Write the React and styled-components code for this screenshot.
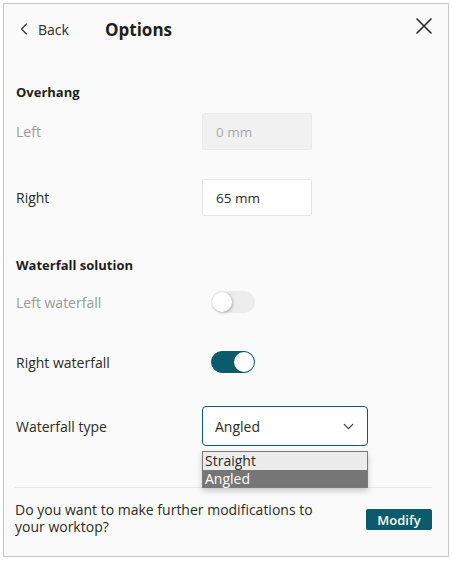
import React from "react";
import styled, { createGlobalStyle } from "styled-components";
import { ChevronLeft, ChevronDown } from "lucide-react";

const Global = createGlobalStyle`
  html, body { margin: 0; padding: 0; background: #ffffff; }
  body { font-family: "Open Sans", "Noto Sans", sans-serif; color: #2b2b2b; }
  * { box-sizing: border-box; }
`;

const TEAL = "#0b5b6d";

const Panel = styled.div`
  margin: 3px;
  width: 446px;
  height: 554px;
  border: 1px solid #c9c9c9;
  background: #fafafa;
  padding: 0 16px 0 12px;
  display: flex;
  flex-direction: column;
  position: relative;
`;

const Header = styled.div`
  height: 50px;
  display: flex;
  align-items: center;
`;

const BackButton = styled.button`
  display: flex;
  align-items: center;
  gap: 4px;
  border: 0;
  background: none;
  padding: 0;
  margin-left: -2px;
  font: inherit;
  font-size: 14px;
  color: #2b2b2b;
  width: 91px;
  cursor: pointer;
`;

const Title = styled.h1`
  margin: 0;
  font-size: 17px;
  font-weight: 700;
  color: #1e1e1e;
  flex: 1;
`;

const CloseButton = styled.button`
  align-self: flex-start;
  margin-top: 14px;
  border: 0;
  background: none;
  padding: 0;
  display: flex;
  color: #2b2b2b;
`;

const SectionTitle = styled.h2`
  margin: ${(p) => p.$mt}px 0 0 0;
  font-size: 13px;
  line-height: 16px;
  font-weight: 700;
  color: #1e1e1e;
`;

const Row = styled.div`
  margin-top: ${(p) => p.$mt}px;
  height: ${(p) => p.$h}px;
  display: flex;
  align-items: center;
  position: relative;
`;

const Label = styled.span`
  width: 186px;
  font-size: 14px;
  color: ${(p) => (p.$disabled ? "#9a9a9a" : "#2b2b2b")};
`;

const Input = styled.div`
  width: 110px;
  height: 37px;
  display: flex;
  align-items: center;
  padding-left: 13px;
  font-size: 13.5px;
  border: 1px solid ${(p) => (p.$disabled ? "#ebebeb" : "#e6e6e6")};
  background: ${(p) => (p.$disabled ? "#f1f1f1" : "#ffffff")};
  color: ${(p) => (p.$disabled ? "#aaaaaa" : "#2b2b2b")};
  border-radius: 2px;
`;

const Toggle = styled.div`
  margin-left: 9px;
  width: 44px;
  height: 22px;
  border-radius: 11px;
  position: relative;
  background: ${(p) => (p.$on ? TEAL : "linear-gradient(to right, #d4d4d4, #ececec 50%, #ededed)")};
  border: 1px solid ${(p) => (p.$on ? TEAL : "#ececec")};
`;

const Knob = styled.div`
  position: absolute;
  top: 0px;
  ${(p) => (p.$on ? "right: 0px;" : "left: 0px;")}
  width: 20px;
  height: 20px;
  border-radius: 50%;
  background: #ffffff;
  box-shadow: ${(p) => (p.$on ? "none" : "1px 1px 3px rgba(0,0,0,0.25)")};
`;

const Select = styled.div`
  width: 166px;
  height: 40px;
  border: 1px solid ${TEAL};
  border-radius: 4px;
  background: #ffffff;
  display: flex;
  align-items: center;
  justify-content: space-between;
  padding: 0 10px 0 12px;
  font-size: 14px;
  color: #2b2b2b;
`;

const Options = styled.ul`
  position: absolute;
  left: 186px;
  top: 45px;
  width: 166px;
  margin: 0;
  padding: 0;
  list-style: none;
  border: 1px solid #7a7a7a;
  box-shadow: 0 3px 6px rgba(0, 0, 0, 0.2);
  z-index: 2;
`;

const Option = styled.li`
  height: 17.5px;
  line-height: 17px;
  padding-left: 2px;
  font-size: 14px;
  background: ${(p) => (p.$selected ? "#767676" : "#ececec")};
  color: ${(p) => (p.$selected ? "#ffffff" : "#2b2b2b")};
`;

const Spacer = styled.div`
  flex: 1;
`;

const Footer = styled.div`
  border-top: 1px solid #e6e6e6;
  margin-left: -1px;
  padding: 13px 0 0 0;
  height: 69px;
  display: flex;
  align-items: flex-start;
  justify-content: space-between;
`;

const Question = styled.p`
  margin: 0;
  width: 305px;
  font-size: 14px;
  line-height: 17px;
  color: #2b2b2b;
`;

const ModifyButton = styled.button`
  margin-top: 8px;
  width: 66px;
  height: 21px;
  border: 0;
  border-radius: 2px;
  background: ${TEAL};
  color: #ffffff;
  font: inherit;
  font-size: 13px;
  font-weight: 600;
  padding: 0;
`;

const CloseIcon = () => (
  <svg width="16" height="16" viewBox="0 0 16 16" fill="none" stroke="currentColor" strokeWidth="1.6" strokeLinecap="round">
    <path d="M1 1 L15 15 M15 1 L1 15" />
  </svg>
);

export default function App() {
  return (
    <>
      <Global />
      <Panel>
        <Header>
          <BackButton>
            <ChevronLeft size={20} strokeWidth={1.3} />
            Back
          </BackButton>
          <Title>Options</Title>
          <CloseButton>
            <CloseIcon />
          </CloseButton>
        </Header>

        <SectionTitle $mt={30}>Overhang</SectionTitle>
        <Row $mt={13} $h={37}>
          <Label $disabled>Left</Label>
          <Input $disabled>0 mm</Input>
        </Row>
        <Row $mt={29} $h={37}>
          <Label>Right</Label>
          <Input>65 mm</Input>
        </Row>

        <SectionTitle $mt={41}>Waterfall solution</SectionTitle>
        <Row $mt={18} $h={22}>
          <Label $disabled>Left waterfall</Label>
          <Toggle>
            <Knob />
          </Toggle>
        </Row>
        <Row $mt={38} $h={22}>
          <Label>Right waterfall</Label>
          <Toggle $on>
            <Knob $on />
          </Toggle>
        </Row>
        <Row $mt={33} $h={40}>
          <Label>Waterfall type</Label>
          <Select>
            Angled
            <ChevronDown size={17} strokeWidth={1.5} />
          </Select>
          <Options>
            <Option>Straight</Option>
            <Option $selected>Angled</Option>
          </Options>
        </Row>

        <Spacer />
        <Footer>
          <Question>Do you want to make further modifications to your worktop?</Question>
          <ModifyButton>Modify</ModifyButton>
        </Footer>
      </Panel>
    </>
  );
}
